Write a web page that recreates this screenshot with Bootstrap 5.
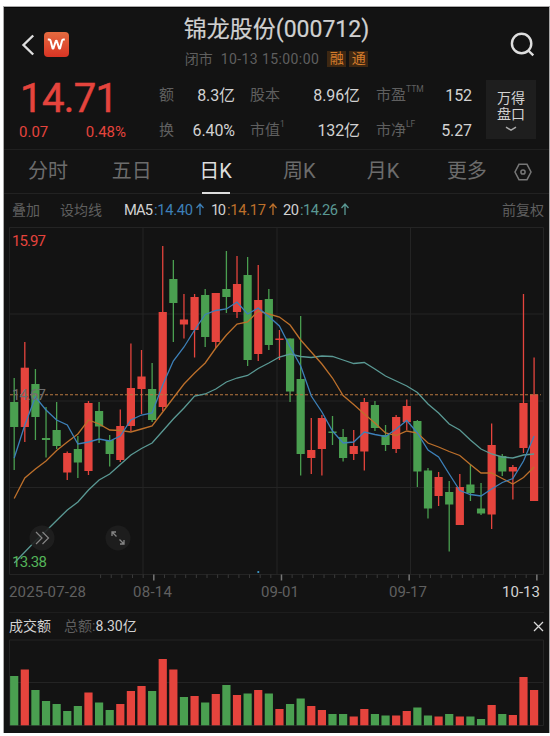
<!DOCTYPE html>
<html lang="zh-CN">
<head>
<meta charset="utf-8">
<meta name="viewport" content="width=device-width, initial-scale=1">
<title>锦龙股份(000712)</title>
<link href="https://cdn.jsdelivr.net/npm/bootstrap@5.3.0/dist/css/bootstrap.min.css" rel="stylesheet">
<style>
body{background:#fff;font-family:Roboto,"Noto Sans CJK SC",sans-serif;color:#d2d2d2;overflow:hidden;line-height:1}
.app{width:545px;height:726px;margin:7px 0 0 4px;background:#131313;border-top:1px solid #050505;outline:1px solid #aaa9a9;outline-offset:-.5px;overflow:hidden}
.dim{color:#5f5f5f}
.up{color:#e5443d}
.head{height:67px;padding:0 14px 0 17px}
.side{width:118px;padding-top:6px}
.side.end{width:121px}
.title{font-size:23px;line-height:28px;margin-top:8px;color:#d0d0d0;white-space:nowrap;-webkit-text-stroke:.2px #d0d0d0}
.state{font-size:14px;line-height:16px;margin-top:7px;white-space:nowrap}
.state .time{letter-spacing:.4px;margin-left:8px}
.tag{background:#3d2712;color:#d57d2c;font-size:14px;width:19px;height:16px;line-height:15px;text-align:center}
.tag+.tag{margin-left:3px}
.quote{height:74px}
.price{width:140px;padding:4px 0 0 14px}
.big{font-size:40px;line-height:39px;letter-spacing:-.6px;padding-left:2px;-webkit-text-stroke:.5px #e5443d}
.chg{font-size:15px;line-height:18px;margin-top:5px;width:108px;padding-left:1px}
.stats{display:grid;grid-template-columns:76px 125px 112px;grid-template-rows:35px 35px;width:313px;margin-left:15px;padding-top:3px}
.stats>div{display:flex;justify-content:space-between;align-items:center;font-size:16px;height:35px;white-space:nowrap}
.stats .lbl{font-size:15px;color:#5f5f5f}
.stats .val{letter-spacing:-.1px}
.stats>div:nth-child(3n+2){padding-left:15px}
.stats>div:nth-child(3n){padding-left:16px}
.stats sup{font-size:8.5px;top:-8px}
.pan{width:50px;height:59px;background:#1e1e1e;margin:5px 0 0 14px;font-size:14px;line-height:16px;padding-top:10px}
.tabs{height:45px;border-top:1px solid #202020;border-bottom:1px solid #222;padding-left:2px;font-size:20px;color:#6c6c6c}
.tabs>span{width:83.8px;text-align:center;line-height:42px;height:44px}
.tabs .on{color:#dedede;position:relative}
.tabs .on:after{content:"";position:absolute;left:28px;bottom:0;width:28px;height:2px;background:#dcdcdc}
.tabs svg{margin-left:5px}
.ma{height:32px;padding:0 5px 0 8px;font-size:14px;white-space:nowrap}
svg{display:block}
.vhead{height:27px;border-top:1px solid #1d1d1d;margin:0 5px;font-size:14px;white-space:nowrap}
.gap-l{margin-left:20px}
.gap-m{margin-left:13px}
</style>
</head>
<body>
<main class="app d-flex flex-column">
<header class="head d-flex justify-content-between flex-shrink-0">
  <div class="side d-flex align-items-center">
    <svg width="15" height="22" viewBox="0 0 15 22" fill="none" stroke="#dedede" stroke-width="2.4"><path d="M12.2 1.500 2.500 11l9.700 9.500"/></svg>
    <svg class="ms-2" width="25" height="25" viewBox="0 0 25 25"><defs><linearGradient id="lg" x2="0" y2="1"><stop stop-color="#e56b40"/><stop offset="1" stop-color="#d83424"/></linearGradient></defs><rect width="25" height="25" rx="4" fill="url(#lg)"/><path d="M3.800 7.600h1.400c.8 0 1.200.4 1.400 1.200l2 7.700h.8l2.300-7.300c.2-.7 1-.7 1.200 0l2.300 7.300h.8l2-7.700c.2-.8.600-1.200 1.400-1.200h1.400" fill="none" stroke="#fff" stroke-width="2" stroke-linejoin="round"/></svg>
  </div>
  <div class="text-center">
    <div class="title">锦龙股份(000712)</div>
    <div class="state dim d-flex justify-content-center"><span>闭市</span><span class="time">10-13 15:00:00</span><span class="tag ms-2">融</span><span class="tag">通</span></div>
  </div>
  <div class="side end d-flex align-items-center justify-content-end"><svg width="25" height="25" viewBox="0 0 25 25" fill="none" stroke="#dedede" stroke-width="2.4"><circle cx="11.6" cy="11.5" r="9.700"/><path d="m17.800 18 5.500 5.300"/></svg></div>
</header>
<section class="quote d-flex flex-shrink-0">
  <div class="price up"><div class="big">14.71</div><div class="chg d-flex justify-content-between"><span>0.07</span><span>0.48%</span></div></div>
  <div class="stats">
    <div><span class="lbl">额</span><span class="val">8.3亿</span></div>
    <div><span class="lbl">股本</span><span class="val">8.96亿</span></div>
    <div><span class="lbl">市盈<sup>TTM</sup></span><span class="val">152</span></div>
    <div><span class="lbl">换</span><span class="val">6.40%</span></div>
    <div><span class="lbl">市值<sup>1</sup></span><span class="val">132亿</span></div>
    <div><span class="lbl">市净<sup>LF</sup></span><span class="val">5.27</span></div>
  </div>
  <div class="pan text-center">万得<br>盘口<svg class="mx-auto mt-1" width="12" height="6" viewBox="0 0 12 6" fill="none" stroke="#aaa" stroke-width="1.5"><path d="m1 1.200 5 3 5-3"/></svg></div>
</section>
<nav class="tabs d-flex align-items-center flex-shrink-0"><span>分时</span><span>五日</span><span class="on">日K</span><span>周K</span><span>月K</span><span>更多</span>
<svg width="18" height="18" viewBox="0 0 18 18" fill="none" stroke="#777" stroke-width="1.500"><path d="M5 1.300h8L17 9l-4 7.700H5L1 9z"/><circle cx="9" cy="9" r="2.100"/></svg></nav>
<section class="ma d-flex align-items-center flex-shrink-0">
  <span class="dim">叠加</span><span class="dim gap-l">设均线</span>
  <svg class="ms-3" width="236" height="30" font-size="14.7" fill="#d2d2d2"><text x="6" y="20" textLength="29">MA5</text><g fill="#3d80b9"><text x="36" y="20" textLength="39">:14.40</text><path d="M82 20V9m-3.500 4L82 9l3.500 4" fill="none" stroke="#3d80b9" stroke-width="1.300"/></g><text x="93" y="20" textLength="15">10</text><g fill="#bd702b"><text x="109" y="20" textLength="39">:14.17</text><path d="M155 20V9m-3.500 4L155 9l3.500 4" fill="none" stroke="#bd702b" stroke-width="1.300"/></g><text x="165" y="20" textLength="16">20</text><g fill="#5a9994"><text x="182" y="20" textLength="38">:14.26</text><path d="M227 20V9m-3.500 4L227 9l3.500 4" fill="none" stroke="#5a9994" stroke-width="1.300"/></g></svg>
  <span class="dim ms-auto">前复权</span>
</section>
<svg id="kline" class="flex-shrink-0" width="545" height="386" viewBox="4 226 545 386"></svg>
<div class="vhead d-flex align-items-center flex-shrink-0"><span>成交额</span><span class="dim gap-m">总额:</span><span>8.30亿</span><svg class="ms-auto" width="11" height="11" viewBox="0 0 11 11" stroke="#d8d8d8" stroke-width="1.300"><path d="m1 1 9 9M10 1 1 10"/></svg></div>
<svg id="volume" class="flex-shrink-0" width="545" height="94" viewBox="4 639 545 94"></svg>
</main>
<script>
// Each candle: direction, high, body top, body bottom, low (y values)
const candles=[['g',378,402,427,470],['r',342,367.7,427,442],['g',369,384,417,440],['g',407,438,440,457.5],['g',402,430,446,449],['r',451.5,453,472.5,480],['g',436,449,462.5,478],['r',401,403,471,475],['g',402,411,426.5,443],['g',435,440,454,466.5],['r',409.5,426,460,462],['r',343.5,388,426,431],['r',350,376.5,389,414],['g',363,389,420,422],['r',246,312,407,411],['g',260,279,303,342],['r',294,319.5,324.5,338.5],['r',294,297,330,357.5],['g',289,295,337,347],['r',293,293,342,348],['g',251,289,297,313],['r',256,284,312,318],['g',257,275,360,366],['r',265,300,354,361],['g',289,299,345,350],['r',330,338.5,340,360],['g',338.5,338.5,391.5,402],['g',316,379,454,475.5],['r',418,450,458,474],['r',415,418,449,475.5],['g',416,431.5,433,445],['g',429,437,458,461.5],['r',430,446,454,460],['r',398,402,451.5,470.5],['g',401,405,428,431],['g',425,435,445,451],['r',415,417,449,453],['r',399.5,406,422,430],['g',420,421,471.5,487],['g',468,470.5,508.5,518.5],['r',472,477,496,506],['g',481,492,504.5,551.5],['r',474,487,525,525],['g',464,484.5,493,501],['g',483,508.5,513.5,515],['r',423.5,445,514.5,529],['g',454,456,471.5,476],['r',465,467,471.5,499.5],['r',294,403,448,453],['r',357.5,394.5,501,501]];
const ma5=[458,425,397,410,420,425,444,442,439,441,436,420,415,413,385,361,347,330,314.5,310.5,309,302,314,308,316.5,326,347,366,396,412,431,443,442,432,434.5,436.5,429,420.5,433,450,457,474,490.5,494.5,496,489,482.5,478.5,461,436];
const ma10=[498.5,478,469,461,450.5,442,434,420,424,430,430.5,432,429,426,412,398,384,373,363,348,335,324,322,311,314,317,325,340,352,364,378,395.5,404.5,414,423,433,435.5,431,433,443,447,451.5,455.5,464.5,473,473,478.5,484,477.5,467];
const ma20=[563,552,541,531,520.5,510,502,490,480,474,464.5,455,448.5,443,431,419,408,396,394,389,382,378,375.5,368.5,363,357,354,356.5,357.5,356,356.5,360,363.5,362.5,369,376,381,386,392.5,404,413,424,430,440,449,454,457,458,455,454];
const vol='g676 r669.5 g690 g701 g704 g711 g706 r692.5 g702.5 g710 r704 r691 r686 g691 r659 r669.5 g697 r696 g702.5 r694 g685 r695 g693.5 r690 g693.5 r709 g704 g698.5 r706 r710 g714 g714 r716.5 r709 g714 g715.5 r715.5 r711 g707.5 g715.5 r716.5 g714 r716.5 g716.5 g719 r705 g714 r715 r677 r690'.split(' ');
const color={r:'#e5443d',g:'#4a9f50'}, X=i=>14.2+i*10.61;
const line=(d,c,w=1)=>`<path d="${d}" fill="none" stroke="${c}" stroke-width="${w}"/>`;
const curve=(a,c)=>line('M'+a.map((y,i)=>X(i).toFixed(1)+' '+y).join('L'),c,1.3);
const label=(x,y,w,s,c,z=15)=>`<text x="${x}" y="${y}" textLength="${w}" font-size="${z}" fill="${c}">${s}</text>`;
let s=line('M9.5 227.5H543.5V574.5H9.5ZM9.5 314H543.5M9.5 401H543.5M9.5 487.5H543.5M143 227V574M277 227V574M410.5 227V574','#242424');
candles.forEach(([k,h,t,b,l],i)=>{s+=line(`M${X(i)} ${h}V${l}`,color[k],1.3)+`<rect x="${X(i)-4.1}" y="${t}" width="8.2" height="${b-t}" fill="${color[k]}"/>`});
s+=`<path d="M10 394.7H541" stroke="#b97840" stroke-width="1.1" stroke-dasharray="3 2"/>`;
s+=curve(ma20,'#5a9994')+curve(ma10,'#bd702b')+curve(ma5,'#3d80b9');
s+=label(12,245.5,34,'15.97',color.r)+label(12,400,34,'14.67','#6f6f6f')+label(12,567,35,'13.38','#53b55a');
s+='<circle cx="42" cy="538" r="12.5" fill="#202020" fill-opacity=".9"/><circle cx="118" cy="538" r="12.5" fill="#1d1d1d"/>';
s+=line('M36 532l6 6-6 6M42.5 532l6 6-6 6','#858585',1.2)+line('M116.5 536.5l-4.5-4.5M112 536v-4h4M119.5 539.5l4.5 4.5M124 540v4h-4','#858585',1.3);
for(let i=0;i<42;i++){const major=[5,17,29,41].includes(i);s+=line(`M${100.6+i*10.64} 574.5v${major?6:3.5}`,major?'#777':'#3a3a3a',major?1.5:1)}
s+='<circle cx="258.3" cy="572" r="1.1" fill="#3d9ed0"/>';
s+=label(9,597,77,'2025-07-28','#606060')+label(133,597,39,'08-14','#606060')+label(261,597,38,'09-01','#606060')+label(389,597,38,'09-17','#606060')+label(502,597,38,'10-13','#d2d2d2');
document.getElementById('kline').innerHTML=s;
let v=line('M9.5 640H543.5V725.5H9.5ZM9.5 682.5H543.5','#242424');
vol.forEach((q,i)=>{const y=+q.slice(1);v+=`<rect x="${X(i)-4.1}" y="${y}" width="8.2" height="${725.3-y}" fill="${color[q[0]]}"/>`});
document.getElementById('volume').innerHTML=v;
</script>
<script src="https://cdn.jsdelivr.net/npm/bootstrap@5.3.0/dist/js/bootstrap.bundle.min.js"></script>
</body>
</html>
